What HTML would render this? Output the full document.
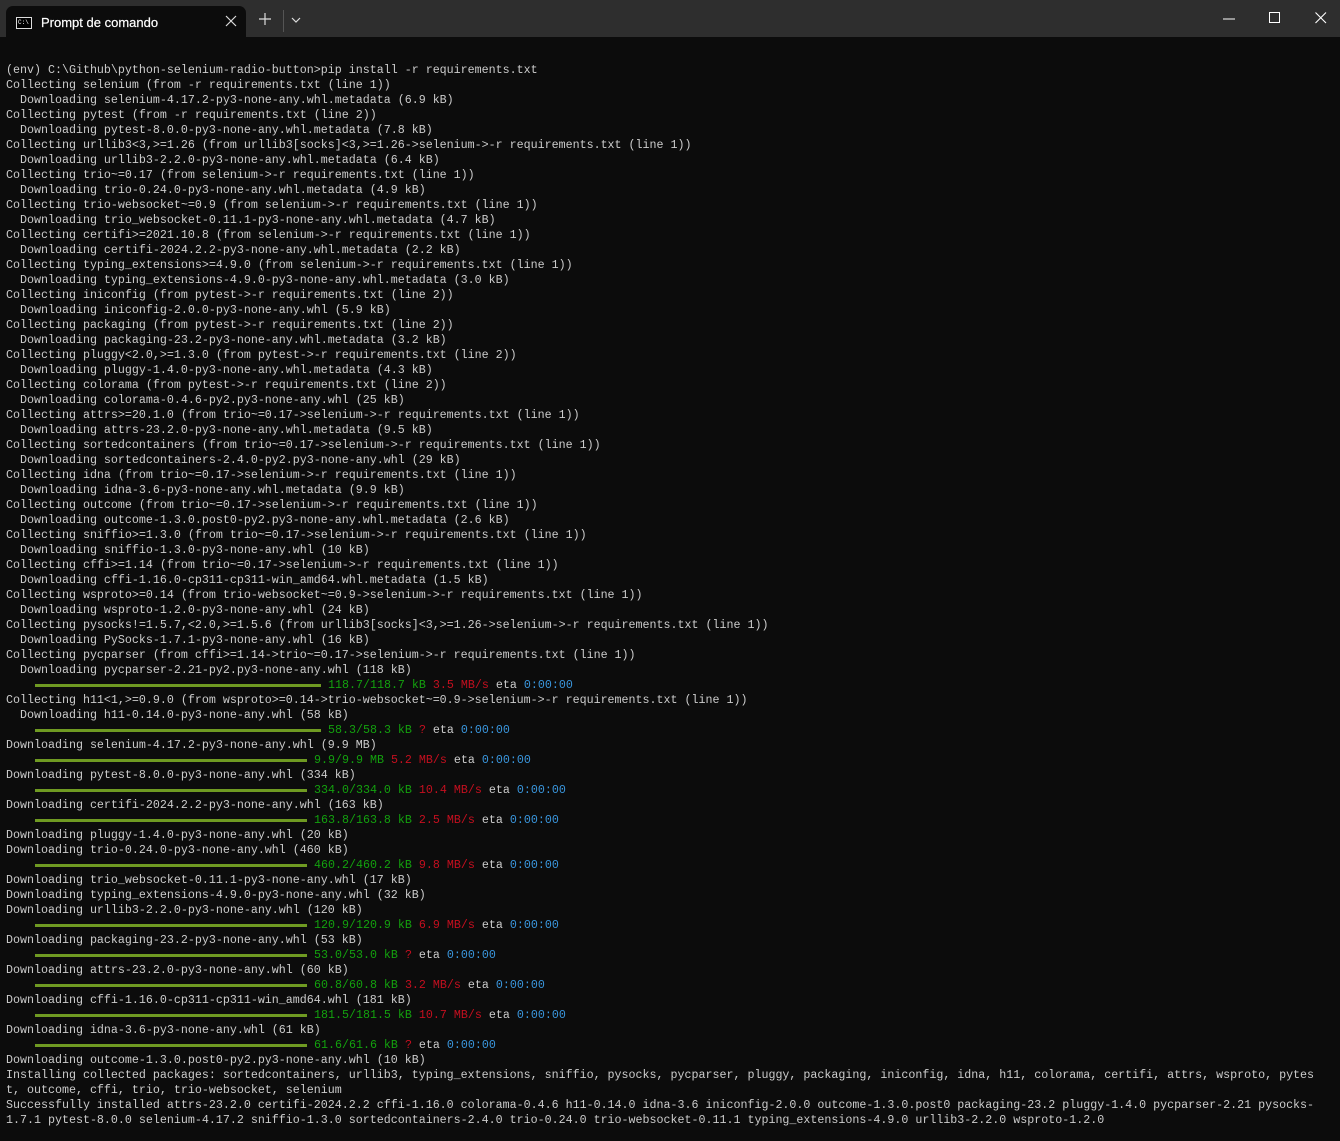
<!DOCTYPE html>
<html><head><meta charset="utf-8"><style>
html,body{margin:0;padding:0;background:#0c0c0c;width:1340px;height:1141px;overflow:hidden}
.tb{position:absolute;left:0;top:0;width:1340px;height:37px;background:#2e2e2e}
.tab{position:absolute;left:6px;top:6px;width:240px;height:31px;background:#0c0c0c;border-radius:7px 7px 0 0}
.tab .t{position:absolute;left:35px;top:9px;font:13px "Liberation Sans",sans-serif;color:#fff;-webkit-text-stroke:0.2px #fff}
.ico{position:absolute;left:10px;top:11px;width:14px;height:10px;border:1px solid #ddd;background:#000}
.ico span{position:absolute;left:1px;top:1px;font:6px "Liberation Mono",monospace;color:#fff;line-height:7px}
.x{position:absolute;left:219px;top:9px}
.plus{position:absolute;left:259px;top:13px}
.sep{position:absolute;left:283px;top:10px;width:1px;height:22px;background:#555}
.chev{position:absolute;left:291px;top:17px}
.wc{position:absolute;top:12px}
pre{position:absolute;left:6px;top:63px;margin:0;font:11.67px/15px "Liberation Mono",monospace;color:#cccccc;white-space:pre}
.b{display:inline-block;height:15px;vertical-align:top;background:linear-gradient(#0c0c0c 0,#0c0c0c 6px,#6f9a22 6px,#6f9a22 9px,#0c0c0c 9px);background-repeat:no-repeat;background-position:1px 0}
.w46{width:287px;background-size:286px 15px}
.w44{width:273px;background-size:272px 15px}
.g{color:#13a10e}.r{color:#c50f1f}.u{color:#3a96dd}
</style></head><body>
<div class="tb">
<div class="tab"><div class="ico"><span>C:\</span></div><div class="t">Prompt de comando</div>
<svg class="x" width="12" height="12" viewBox="0 0 12 12"><path d="M1 1L11 11M11 1L1 11" stroke="#ddd" stroke-width="1.2"/></svg></div>
<svg class="plus" width="12" height="12" viewBox="0 0 12 12"><path d="M6 0V12M0 6H12" stroke="#ddd" stroke-width="1.2"/></svg>
<div class="sep"></div>
<svg class="chev" width="10" height="6" viewBox="0 0 10 6"><path d="M1 1L5 5L9 1" stroke="#ddd" stroke-width="1.2" fill="none"/></svg>
<svg class="wc" style="left:1223px;top:18px" width="12" height="2"><path d="M0 1H12" stroke="#fff" stroke-width="1"/></svg>
<svg class="wc" style="left:1269px" width="12" height="12"><rect x="0.5" y="0.5" width="10" height="10" stroke="#fff" fill="none"/></svg>
<svg class="wc" style="left:1315px" width="12" height="12"><path d="M0.5 0.5L11 11M11 0.5L0.5 11" stroke="#fff" stroke-width="1.1"/></svg>
</div>
<pre>(env) C:\Github\python-selenium-radio-button>pip install -r requirements.txt
Collecting selenium (from -r requirements.txt (line 1))
  Downloading selenium-4.17.2-py3-none-any.whl.metadata (6.9 kB)
Collecting pytest (from -r requirements.txt (line 2))
  Downloading pytest-8.0.0-py3-none-any.whl.metadata (7.8 kB)
Collecting urllib3&lt;3,&gt;=1.26 (from urllib3[socks]&lt;3,&gt;=1.26-&gt;selenium-&gt;-r requirements.txt (line 1))
  Downloading urllib3-2.2.0-py3-none-any.whl.metadata (6.4 kB)
Collecting trio~=0.17 (from selenium-&gt;-r requirements.txt (line 1))
  Downloading trio-0.24.0-py3-none-any.whl.metadata (4.9 kB)
Collecting trio-websocket~=0.9 (from selenium-&gt;-r requirements.txt (line 1))
  Downloading trio_websocket-0.11.1-py3-none-any.whl.metadata (4.7 kB)
Collecting certifi&gt;=2021.10.8 (from selenium-&gt;-r requirements.txt (line 1))
  Downloading certifi-2024.2.2-py3-none-any.whl.metadata (2.2 kB)
Collecting typing_extensions&gt;=4.9.0 (from selenium-&gt;-r requirements.txt (line 1))
  Downloading typing_extensions-4.9.0-py3-none-any.whl.metadata (3.0 kB)
Collecting iniconfig (from pytest-&gt;-r requirements.txt (line 2))
  Downloading iniconfig-2.0.0-py3-none-any.whl (5.9 kB)
Collecting packaging (from pytest-&gt;-r requirements.txt (line 2))
  Downloading packaging-23.2-py3-none-any.whl.metadata (3.2 kB)
Collecting pluggy&lt;2.0,&gt;=1.3.0 (from pytest-&gt;-r requirements.txt (line 2))
  Downloading pluggy-1.4.0-py3-none-any.whl.metadata (4.3 kB)
Collecting colorama (from pytest-&gt;-r requirements.txt (line 2))
  Downloading colorama-0.4.6-py2.py3-none-any.whl (25 kB)
Collecting attrs&gt;=20.1.0 (from trio~=0.17-&gt;selenium-&gt;-r requirements.txt (line 1))
  Downloading attrs-23.2.0-py3-none-any.whl.metadata (9.5 kB)
Collecting sortedcontainers (from trio~=0.17-&gt;selenium-&gt;-r requirements.txt (line 1))
  Downloading sortedcontainers-2.4.0-py2.py3-none-any.whl (29 kB)
Collecting idna (from trio~=0.17-&gt;selenium-&gt;-r requirements.txt (line 1))
  Downloading idna-3.6-py3-none-any.whl.metadata (9.9 kB)
Collecting outcome (from trio~=0.17-&gt;selenium-&gt;-r requirements.txt (line 1))
  Downloading outcome-1.3.0.post0-py2.py3-none-any.whl.metadata (2.6 kB)
Collecting sniffio&gt;=1.3.0 (from trio~=0.17-&gt;selenium-&gt;-r requirements.txt (line 1))
  Downloading sniffio-1.3.0-py3-none-any.whl (10 kB)
Collecting cffi&gt;=1.14 (from trio~=0.17-&gt;selenium-&gt;-r requirements.txt (line 1))
  Downloading cffi-1.16.0-cp311-cp311-win_amd64.whl.metadata (1.5 kB)
Collecting wsproto&gt;=0.14 (from trio-websocket~=0.9-&gt;selenium-&gt;-r requirements.txt (line 1))
  Downloading wsproto-1.2.0-py3-none-any.whl (24 kB)
Collecting pysocks!=1.5.7,&lt;2.0,&gt;=1.5.6 (from urllib3[socks]&lt;3,&gt;=1.26-&gt;selenium-&gt;-r requirements.txt (line 1))
  Downloading PySocks-1.7.1-py3-none-any.whl (16 kB)
Collecting pycparser (from cffi&gt;=1.14-&gt;trio~=0.17-&gt;selenium-&gt;-r requirements.txt (line 1))
  Downloading pycparser-2.21-py2.py3-none-any.whl (118 kB)
    <span class="b w46"></span> <span class="g">118.7/118.7 kB</span> <span class="r">3.5 MB/s</span> eta <span class="u">0:00:00</span>
Collecting h11&lt;1,&gt;=0.9.0 (from wsproto&gt;=0.14-&gt;trio-websocket~=0.9-&gt;selenium-&gt;-r requirements.txt (line 1))
  Downloading h11-0.14.0-py3-none-any.whl (58 kB)
    <span class="b w46"></span> <span class="g">58.3/58.3 kB</span> <span class="r">?</span> eta <span class="u">0:00:00</span>
Downloading selenium-4.17.2-py3-none-any.whl (9.9 MB)
    <span class="b w44"></span> <span class="g">9.9/9.9 MB</span> <span class="r">5.2 MB/s</span> eta <span class="u">0:00:00</span>
Downloading pytest-8.0.0-py3-none-any.whl (334 kB)
    <span class="b w44"></span> <span class="g">334.0/334.0 kB</span> <span class="r">10.4 MB/s</span> eta <span class="u">0:00:00</span>
Downloading certifi-2024.2.2-py3-none-any.whl (163 kB)
    <span class="b w44"></span> <span class="g">163.8/163.8 kB</span> <span class="r">2.5 MB/s</span> eta <span class="u">0:00:00</span>
Downloading pluggy-1.4.0-py3-none-any.whl (20 kB)
Downloading trio-0.24.0-py3-none-any.whl (460 kB)
    <span class="b w44"></span> <span class="g">460.2/460.2 kB</span> <span class="r">9.8 MB/s</span> eta <span class="u">0:00:00</span>
Downloading trio_websocket-0.11.1-py3-none-any.whl (17 kB)
Downloading typing_extensions-4.9.0-py3-none-any.whl (32 kB)
Downloading urllib3-2.2.0-py3-none-any.whl (120 kB)
    <span class="b w44"></span> <span class="g">120.9/120.9 kB</span> <span class="r">6.9 MB/s</span> eta <span class="u">0:00:00</span>
Downloading packaging-23.2-py3-none-any.whl (53 kB)
    <span class="b w44"></span> <span class="g">53.0/53.0 kB</span> <span class="r">?</span> eta <span class="u">0:00:00</span>
Downloading attrs-23.2.0-py3-none-any.whl (60 kB)
    <span class="b w44"></span> <span class="g">60.8/60.8 kB</span> <span class="r">3.2 MB/s</span> eta <span class="u">0:00:00</span>
Downloading cffi-1.16.0-cp311-cp311-win_amd64.whl (181 kB)
    <span class="b w44"></span> <span class="g">181.5/181.5 kB</span> <span class="r">10.7 MB/s</span> eta <span class="u">0:00:00</span>
Downloading idna-3.6-py3-none-any.whl (61 kB)
    <span class="b w44"></span> <span class="g">61.6/61.6 kB</span> <span class="r">?</span> eta <span class="u">0:00:00</span>
Downloading outcome-1.3.0.post0-py2.py3-none-any.whl (10 kB)
Installing collected packages: sortedcontainers, urllib3, typing_extensions, sniffio, pysocks, pycparser, pluggy, packaging, iniconfig, idna, h11, colorama, certifi, attrs, wsproto, pytes
t, outcome, cffi, trio, trio-websocket, selenium
Successfully installed attrs-23.2.0 certifi-2024.2.2 cffi-1.16.0 colorama-0.4.6 h11-0.14.0 idna-3.6 iniconfig-2.0.0 outcome-1.3.0.post0 packaging-23.2 pluggy-1.4.0 pycparser-2.21 pysocks-
1.7.1 pytest-8.0.0 selenium-4.17.2 sniffio-1.3.0 sortedcontainers-2.4.0 trio-0.24.0 trio-websocket-0.11.1 typing_extensions-4.9.0 urllib3-2.2.0 wsproto-1.2.0</pre>
</body></html>
